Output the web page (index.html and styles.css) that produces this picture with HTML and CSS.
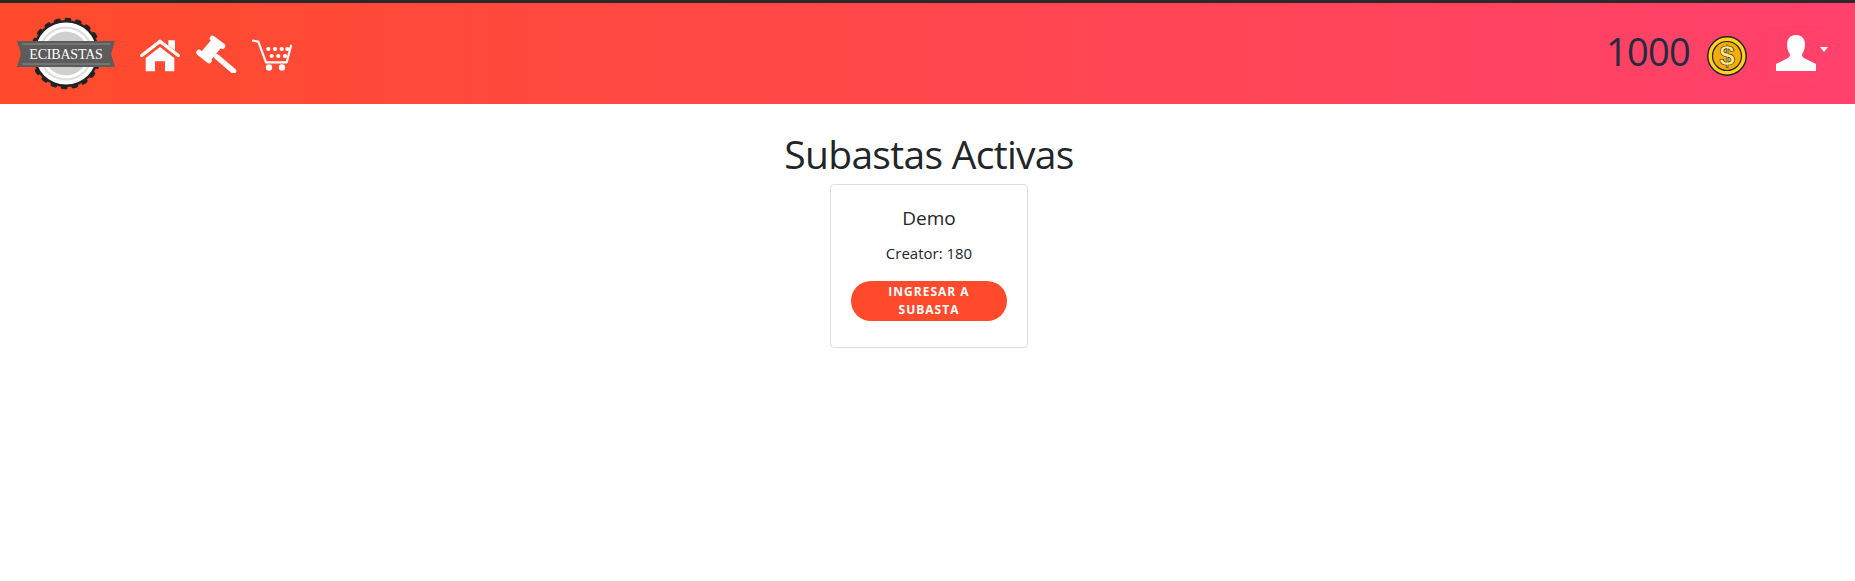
FILE: index.html
```html
<!DOCTYPE html>
<html lang="en">
<head>
    <meta charset="UTF-8">
    <meta name="viewport" content="width=device-width, initial-scale=1.0">
    <title>Ecibastas</title>
    <link rel="stylesheet" href="styles.css">
</head>
<body>

    <nav class="navbar">
        <a class="logo" href="#">
            <svg width="100" height="76" viewBox="0 0 100 76">
                <circle cx="50" cy="37.5" r="33.500" fill="#222"/>
                <circle cx="50" cy="37.5" r="34" fill="none" stroke="#222" stroke-width="3.500" stroke-linecap="round" stroke-dasharray="3.400 7.280"/>
                <circle cx="50" cy="37.5" r="31" fill="#fff"/>
                <circle cx="50" cy="37.5" r="27" fill="#dcdcda"/>
                <circle cx="50" cy="37.5" r="25" fill="#fff"/>
                <circle cx="50" cy="37.5" r="22" fill="#cfcfcd"/>
                <polygon fill="#5c5c5c" points="1,25 99,25 95,38 99,51 1,51 5,38"/>
                <line x1="6" y1="28" x2="94" y2="28" stroke="#8d8d8d"/>
                <line x1="6" y1="48" x2="94" y2="48" stroke="#8d8d8d"/>
                <text class="logo-text" x="50" y="43">ECIBASTAS</text>
            </svg>
        </a>
        <a class="nav-icon" href="#">
            <svg width="40" height="38" viewBox="0 -4.5 40 38">
                <path fill="#fff" d="M28.300 .7H35V11l-6.700-5z"/>
                <path fill="none" stroke="#fff" stroke-width="3.400" stroke-linecap="round" d="M1.700 16 20 2l18.300 14"/>
                <path fill="#fff" d="M20 7.500 5.700 18.500v13.200H15V21.700h10v10h9.300V18.500z"/>
            </svg>
        </a>
        <a class="nav-icon" href="#">
            <svg width="42" height="38" viewBox="0 0 42 38">
                <path fill="#fff" d="M18 3 28 10.500 16 25 6 17z"/>
                <path fill="none" stroke="#fff" stroke-width="5.500" stroke-linecap="round" d="M17.500 3.500 27.500 11M4 17.500 14 25.500"/>
                <path fill="none" stroke="#fff" stroke-width="5.500" stroke-linecap="round" d="M22 22 38.500 36"/>
            </svg>
        </a>
        <a class="nav-icon" href="#">
            <svg width="40" height="38" viewBox="0 -5 40 38">
                <path fill="none" stroke="#fff" stroke-width="2.200" stroke-linecap="round" stroke-linejoin="round" d="M.9 .6 6.300 1.600 14 22.300H34.700L39 5.700"/>
                <circle cx="17" cy="27.500" r="3.200" fill="#fff"/>
                <circle cx="30" cy="27.500" r="3.200" fill="#fff"/>
                <g fill="#fff">
                    <circle cx="16.300" cy="9" r="2.100"/><circle cx="23" cy="9" r="2.100"/><circle cx="29.700" cy="9" r="2.100"/><circle cx="35.300" cy="9" r="2.100"/>
                    <circle cx="19.700" cy="16" r="2.100"/><circle cx="26.300" cy="16" r="2.100"/><circle cx="33" cy="16" r="2.100"/>
                </g>
            </svg>
        </a>

        <div class="nav-right">
            <span class="coins">1000</span>
            <svg class="coin" width="40" height="40" viewBox="0 0 40 40">
                <circle cx="20" cy="20" r="19.200" fill="#ffd21f" stroke="#222" stroke-width="1.400"/>
                <circle cx="20" cy="20" r="14.500" fill="#f7ad00" stroke="#222" stroke-width="1.200"/>
                <text class="coin-text" x="20" y="29">$</text>
            </svg>
            <button class="user-btn">
                <svg width="40" height="36" viewBox="0 0 40 36">
                    <path fill="#fff" d="M20 0c6 0 9 4 9 10 0 4-1.500 7-3 9.500 0 1.500 .5 2.500 2 3.500l12 6v7H0v-7l12-6c1.500-1 2-2 2-3.500C12.500 17 11 14 11 10 11 4 14 0 20 0z"/>
                </svg>
                <span class="caret"></span>
            </button>
        </div>
    </nav>

    <main class="content">
        <h1>Subastas Activas</h1>

        <div class="card">
            <h5>Demo</h5>
            <p>Creator: 180</p>
            <button class="enter-btn">Ingresar a subasta</button>
        </div>
    </main>

</body>
</html>
```

FILE: styles.css
```css
body {
    font-family: "Open Sans", "Noto Sans", sans-serif;
    color: #212529;
    background-color: #fff;
    margin: 0;
}
.navbar {
    display: flex;
    align-items: center;
    height: 101px;
    padding-left: 16px;
    border-top: 3px solid #2a2a2a;
    background: linear-gradient(to right, #ff4b2b, #ff416c);
}
.logo {
    display: flex;
    margin-right: 24px;
}
.logo-text {
    font-family: "Liberation Serif", serif;
    font-size: 14px;
    letter-spacing: -.2px;
    fill: #fff;
    text-anchor: middle;
}
.nav-icon {
    display: flex;
    margin-right: 15px;
}
.nav-right {
    display: flex;
    align-items: center;
    margin-left: auto;
    margin-right: 12px;
}
.coins {
    font-size: 38px;
    letter-spacing: -.7px;
    color: #232b3e;
    margin-right: 17px;
    margin-bottom: 6px;
}
.coin {
    margin-top: 5px;
    margin-right: 14px;
}
.coin-text {
    font-family: "Liberation Sans", sans-serif;
    font-size: 28px;
    font-weight: 700;
    fill: #ffe98a;
    stroke: #222;
    stroke-width: .6;
    text-anchor: middle;
}
.user-btn {
    display: flex;
    align-items: center;
    width: 82px;
    height: 58px;
    margin-bottom: 2px;
    padding: 0 0 0 14px;
    border: 1px solid #ff4569;
    border-radius: 5px;
    background: none;
}
.caret {
    margin: 0 0 6px 4px;
    border-top: 5px solid #fff;
    border-left: 4px solid transparent;
    border-right: 4px solid transparent;
}
.content {
    padding-left: 3px;
}
h1 {
    font-size: 39px;
    font-weight: 400;
    line-height: 48px;
    letter-spacing: -.7px;
    text-align: center;
    margin: 26px 0 6px;
}
.card {
    box-sizing: border-box;
    width: 198px;
    height: 164px;
    margin: 0 auto;
    padding: 21px 20px 20px;
    text-align: center;
    border: 1px solid #ddd;
    border-radius: 4px;
}
h5 {
    font-size: 19px;
    font-weight: 400;
    line-height: 24px;
    margin: 0 0 12px;
}
p {
    font-size: 15px;
    line-height: 22px;
    margin: 0 0 17px;
}
.enter-btn {
    display: block;
    width: 156px;
    height: 40px;
    padding: 0 30px;
    font-family: "Open Sans", sans-serif;
    font-size: 12px;
    font-weight: 700;
    line-height: 18px;
    letter-spacing: 1px;
    text-transform: uppercase;
    color: #fff;
    background-color: #ff4b2b;
    border: none;
    border-radius: 20px;
}
```
